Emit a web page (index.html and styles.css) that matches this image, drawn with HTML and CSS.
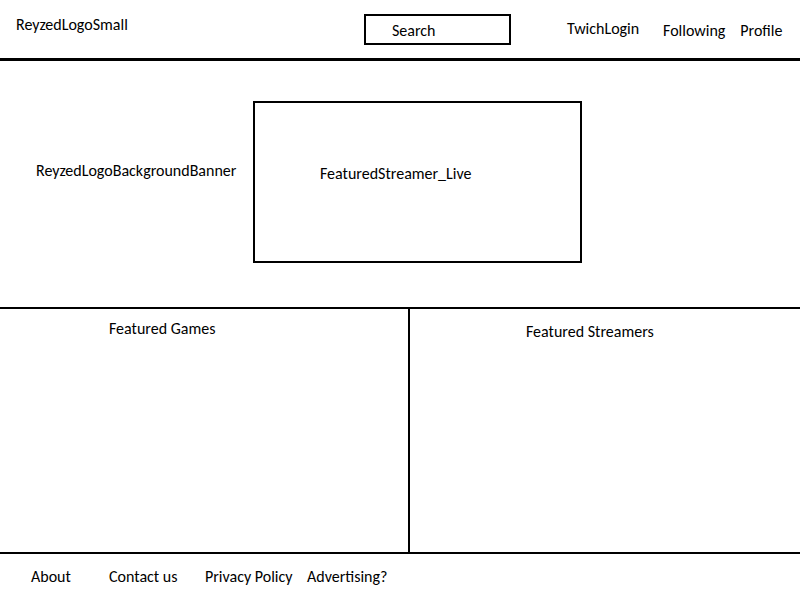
FILE: index.html
```html
<!DOCTYPE html>
<html lang="en">
<head>
<meta charset="utf-8">
<meta name="viewport" content="width=device-width, initial-scale=1">
<title>Reyzed</title>
<link rel="stylesheet" href="styles.css">
</head>
<body>
<header class="header">
  <a class="logo" href="#">ReyzedLogoSmall</a>
  <form class="search"><input class="search-input" type="text" value="Search" aria-label="Search"></form>
  <a class="login" href="#">TwichLogin</a>
  <nav class="account">
    <a href="#">Following</a>
    <a href="#">Profile</a>
  </nav>
</header>
<main class="main">
  <section class="banner">
    <p class="banner-logo">ReyzedLogoBackgroundBanner</p>
    <div class="live"><p>FeaturedStreamer_Live</p></div>
  </section>
  <div class="featured">
    <section class="games"><h2>Featured Games</h2></section>
    <section class="streamers"><h2>Featured Streamers</h2></section>
  </div>
</main>
<footer class="footer">
  <a href="#">About</a>
  <a href="#">Contact us</a>
  <a href="#">Privacy Policy</a>
  <a href="#">Advertising?</a>
</footer>
</body>
</html>
```
FILE: styles.css
```css
* {
  box-sizing: border-box;
}

body {
  display: flex;
  flex-direction: column;
  min-height: 100vh;
  margin: 0;
  background: #fff;
  color: #000;
  font: 16px/20px Carlito, Calibri, Lato, sans-serif;
}

a {
  color: inherit;
  text-decoration: none;
  white-space: nowrap;
}

h2,
p {
  margin: 0;
  font-size: inherit;
  font-weight: 400;
}

.header {
  display: grid;
  grid-template-columns: 364fr 203fr 96fr 137fr;
  align-items: start;
  border-bottom: 3px solid #000;
}

.logo {
  padding: 15px 16px;
}

.search {
  padding: 14px 56px 13px 0;
}

.search-input {
  display: block;
  width: 100%;
  padding: 5px 26px 2px;
  border: 2px solid #000;
  border-radius: 0;
  background: #fff;
  color: inherit;
  font: inherit;
}

.login {
  padding-top: 19px;
}

.account {
  display: flex;
  gap: 15px;
  padding-top: 21px;
}

.main {
  display: flex;
  flex: 1;
  flex-direction: column;
}

.banner {
  display: grid;
  grid-template-columns: 253fr 329fr 218fr;
  padding: 40px 0 44px;
}

.banner-logo {
  padding: 60px 0 0 36px;
}

.live {
  min-height: 162px;
  padding: 61px 65px;
  border: 2px solid #000;
}

.featured {
  display: grid;
  flex: 1;
  grid-template-columns: 410fr 390fr;
  border: solid #000;
  border-width: 2px 0;
}

.games {
  padding: 10px 0 0 109px;
  border-right: 2px solid #000;
}

.streamers {
  padding: 13px 0 0 116px;
}

.footer {
  display: grid;
  grid-template-columns: 78px 96px 102px auto;
  padding: 13px 31px;
}
```
